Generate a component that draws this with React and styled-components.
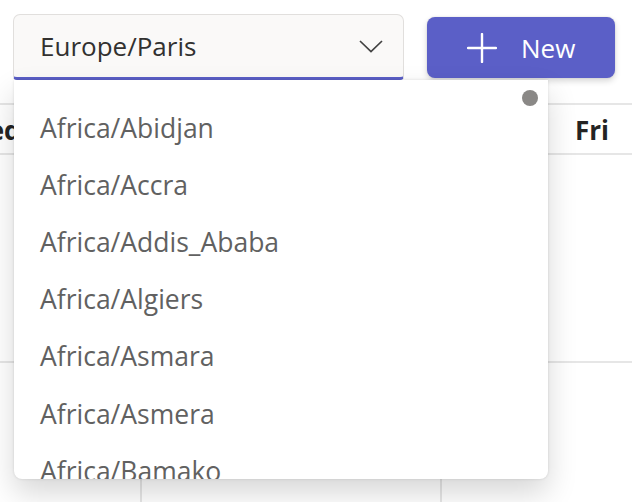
import React from "react";
import styled, { createGlobalStyle } from "styled-components";

const GlobalStyle = createGlobalStyle`
  html, body {
    margin: 0;
    padding: 0;
    background: #ffffff;
    font-family: "Open Sans", "Noto Sans", sans-serif;
    overflow: hidden;
  }
`;

const Page = styled.div`
  position: relative;
  width: 632px;
  height: 502px;
  overflow: hidden;
  background: #ffffff;
`;

const Toolbar = styled.div`
  position: relative;
  z-index: 2;
  display: flex;
  align-items: flex-start;
  padding: 14px 0 0 13px;
  height: 66px;
`;

const Picker = styled.div`
  position: relative;
  width: 391px;
`;

const Trigger = styled.div`
  box-sizing: border-box;
  height: 66px;
  display: flex;
  align-items: center;
  justify-content: space-between;
  padding: 0 20px 0 26px;
  background: #faf9f8;
  border: 1px solid #e1dfdd;
  border-bottom: 3px solid #5b5fc7;
  border-radius: 7px 7px 4px 4px;
  color: #323130;
  font-size: 26px;
`;

const Popup = styled.div`
  position: absolute;
  top: 66px;
  left: 1px;
  width: 534px;
  height: 399px;
  background: #ffffff;
  border-radius: 0 0 8px 8px;
  box-shadow: 0 0 3px rgba(0, 0, 0, 0.12), 0 14px 30px rgba(0, 0, 0, 0.16);
  overflow: hidden;
`;

const List = styled.ul`
  list-style: none;
  margin: 0;
  padding: 19px 0 0;
`;

const Option = styled.li`
  height: 57.2px;
  display: flex;
  align-items: center;
  padding-left: 26px;
  color: #616161;
  font-size: 26.5px;
  white-space: nowrap;
`;

const ScrollDot = styled.div`
  position: absolute;
  top: 10px;
  right: 10px;
  width: 16px;
  height: 16px;
  border-radius: 50%;
  background: #8a8886;
`;

const NewButton = styled.button`
  box-sizing: border-box;
  margin: 3px 0 0 23px;
  width: 188px;
  height: 61px;
  display: flex;
  align-items: center;
  gap: 24px;
  padding: 0 0 0 40px;
  border: none;
  border-radius: 8px;
  background: #5b5fc7;
  color: #ffffff;
  font-family: inherit;
  font-size: 26px;
  font-weight: 500;
  box-shadow: 0 0 2px rgba(0, 0, 0, 0.12), 0 3px 6px rgba(0, 0, 0, 0.16);
`;

const Calendar = styled.div`
  margin: 23px 0 0 -158px;
  display: grid;
  grid-template-columns: repeat(4, 300px);
  grid-template-rows: 50px 208px 208px;
  border-top: 2px solid #e6e6e6;
`;

const DayHead = styled.div`
  display: flex;
  align-items: center;
  justify-content: center;
  border-bottom: 2px solid #e6e6e6;
  color: #242424;
  font-size: 26px;
  font-weight: 700;
  padding-top: 2px;
`;

const Cell = styled.div`
  border-bottom: 2px solid #e6e6e6;
  border-right: ${(p) => (p.$last ? "none" : "2px solid #e6e6e6")};
`;

const Chevron = () => (
  <svg width="24" height="13" viewBox="0 0 24 13" fill="none">
    <polyline points="1,1 12,11.5 23,1" stroke="#424242" strokeWidth="1.7" />
  </svg>
);

const PlusIcon = () => (
  <svg width="30" height="30" viewBox="0 0 30 30" fill="none">
    <line x1="15" y1="1" x2="15" y2="29" stroke="#ffffff" strokeWidth="2.4" strokeLinecap="round" />
    <line x1="1" y1="15" x2="29" y2="15" stroke="#ffffff" strokeWidth="2.4" strokeLinecap="round" />
  </svg>
);

const zones = [
  "Africa/Abidjan",
  "Africa/Accra",
  "Africa/Addis_Ababa",
  "Africa/Algiers",
  "Africa/Asmara",
  "Africa/Asmera",
  "Africa/Bamako",
  "Africa/Bangui",
];

const days = ["Wed", "Thu", "Fri", "Sat"];

export default function App() {
  return (
    <Page>
      <GlobalStyle />
      <Toolbar>
        <Picker>
          <Trigger>
            <span>Europe/Paris</span>
            <Chevron />
          </Trigger>
          <Popup>
            <List>
              {zones.map((z) => (
                <Option key={z}>{z}</Option>
              ))}
            </List>
            <ScrollDot />
          </Popup>
        </Picker>
        <NewButton>
          <PlusIcon />
          New
        </NewButton>
      </Toolbar>
      <Calendar>
        {days.map((d) => (
          <DayHead key={d}>{d}</DayHead>
        ))}
        {[0, 1].map((row) =>
          days.map((d, i) => <Cell key={row + d} $last={i === days.length - 1} />)
        )}
      </Calendar>
    </Page>
  );
}
